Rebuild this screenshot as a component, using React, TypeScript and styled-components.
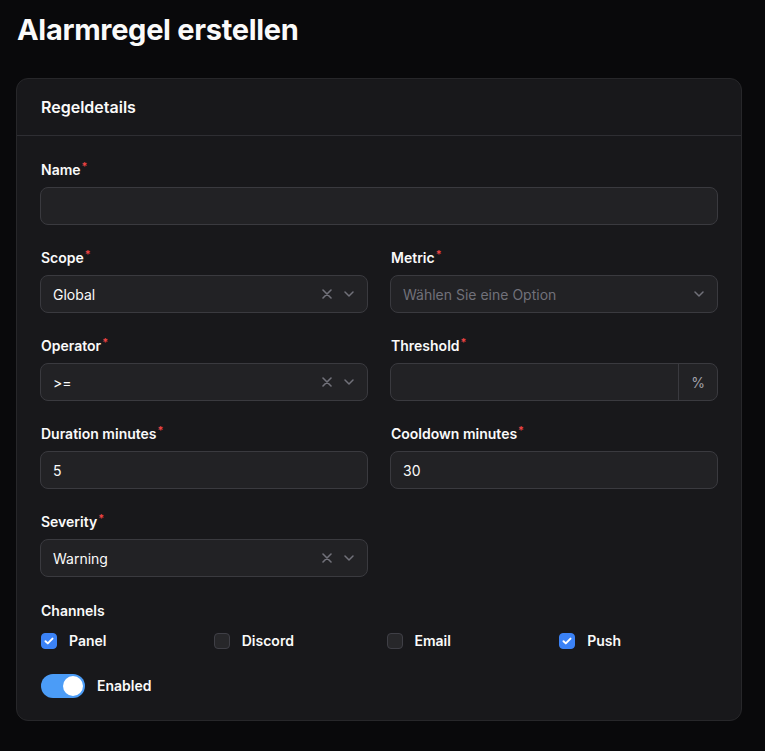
import React, { useState } from 'react';
import styled, { createGlobalStyle } from 'styled-components';

const GlobalStyle = createGlobalStyle`
    html, body {
        margin: 0;
        background: #09090b;
        color: #fafafa;
        font-family: Inter, 'Noto Sans', sans-serif;
    }
    * { box-sizing: border-box; }
`;

const channels = [
    { name: 'Panel', checked: true },
    { name: 'Discord', checked: false },
    { name: 'Email', checked: false },
    { name: 'Push', checked: true },
];

const ClearIcon = () => (
    <svg width="10" height="10" viewBox="0 0 10 10" fill="none" stroke="currentColor" strokeWidth="1.6" strokeLinecap="round">
        <path d="M1 1l8 8M9 1l-8 8" />
    </svg>
);

const ChevronIcon = () => (
    <svg width="10" height="6" viewBox="0 0 10 6" fill="none" stroke="currentColor" strokeWidth="1.5" strokeLinecap="round" strokeLinejoin="round">
        <path d="M1 1l4 4 4-4" />
    </svg>
);

function Field({ label, required = true, children }: { label: string; required?: boolean; children: React.ReactNode }) {
    return (
        <S.Field>
            <S.Label>
                {label}
                {required && <S.Star>*</S.Star>}
            </S.Label>
            {children}
        </S.Field>
    );
}

function Select({ value, placeholder, clearable = true }: { value?: string; placeholder?: string; clearable?: boolean }) {
    return (
        <S.Box>
            <S.Value $muted={!value}>{value || placeholder}</S.Value>
            <S.Icons>
                {clearable && value && <ClearIcon />}
                <ChevronIcon />
            </S.Icons>
        </S.Box>
    );
}

export default function App() {
    const [enabled, setEnabled] = useState(true);

    return (
        <S.Page>
            <GlobalStyle />
            <S.Title>Alarmregel erstellen</S.Title>
            <S.Card>
                <S.Header>Regeldetails</S.Header>
                <S.Body>
                    <Field label="Name">
                        <S.Box />
                    </Field>
                    <S.Grid>
                        <Field label="Scope">
                            <Select value="Global" />
                        </Field>
                        <Field label="Metric">
                            <Select placeholder="Wählen Sie eine Option" />
                        </Field>
                        <Field label="Operator">
                            <Select value=">=" />
                        </Field>
                        <Field label="Threshold">
                            <S.Box>
                                <S.Value />
                                <S.Suffix>%</S.Suffix>
                            </S.Box>
                        </Field>
                        <Field label="Duration minutes">
                            <S.Box>
                                <S.Value>5</S.Value>
                            </S.Box>
                        </Field>
                        <Field label="Cooldown minutes">
                            <S.Box>
                                <S.Value>30</S.Value>
                            </S.Box>
                        </Field>
                        <Field label="Severity">
                            <Select value="Warning" />
                        </Field>
                    </S.Grid>
                    <S.ChannelField>
                        <S.Label>Channels</S.Label>
                        <S.Channels>
                            {channels.map((c) => (
                                <S.Check key={c.name}>
                                    <S.CheckBox $checked={c.checked}>
                                        {c.checked && (
                                            <svg width="10" height="8" viewBox="0 0 10 8" fill="none" stroke="#fff" strokeWidth="2" strokeLinecap="round" strokeLinejoin="round">
                                                <path d="M1.5 4.2l2.3 2.2L8.5 1.6" />
                                            </svg>
                                        )}
                                    </S.CheckBox>
                                    {c.name}
                                </S.Check>
                            ))}
                        </S.Channels>
                    </S.ChannelField>
                    <S.Check onClick={() => setEnabled(!enabled)}>
                        <S.Switch $on={enabled}>
                            <S.Knob $on={enabled} />
                        </S.Switch>
                        Enabled
                    </S.Check>
                </S.Body>
            </S.Card>
        </S.Page>
    );
}

const S: any = {};
S.Page = styled.div`
    padding: 8px 16px 24px 16px;
    width: 765px;
`;

S.Title = styled.h1`
    margin: 0 0 26px 1px;
    font-size: 29px;
    line-height: 44px;
    font-weight: 700;
    letter-spacing: -0.3px;
`;

S.Card = styled.div`
    background: #18181b;
    border: 1px solid #27272a;
    border-radius: 12px;
    width: 726px;
`;

S.Header = styled.div`
    padding: 18px 24px;
    font-size: 16px;
    line-height: 20px;
    font-weight: 600;
    border-bottom: 1px solid #2e2e33;
`;

S.Body = styled.div`
    padding: 24px 23px 22px 23px;
    display: flex;
    flex-direction: column;
    gap: 23px;
`;

S.Grid = styled.div`
    display: grid;
    grid-template-columns: 1fr 1fr;
    column-gap: 22px;
    row-gap: 23px;
`;

S.Field = styled.div`
    display: flex;
    flex-direction: column;
    gap: 7px;
`;

S.ChannelField = styled(S.Field)`
    margin-top: 1px;
`;

S.Label = styled.div`
    font-size: 14px;
    line-height: 20px;
    font-weight: 600;
    margin-left: 1px;
`;

S.Star = styled.sup`
    color: #ef4444;
    font-size: 11px;
    margin-left: 1px;
    vertical-align: 5px;
    line-height: 0;
`;

S.Box = styled.div`
    display: flex;
    align-items: center;
    height: 38px;
    background: #222225;
    border: 1px solid #3a3a3f;
    border-radius: 8px;
    overflow: hidden;
`;

S.Value = styled.div<{ $muted?: boolean }>`
    flex: 1;
    padding: 0 12px;
    font-size: 14px;
    color: ${({ $muted }) => ($muted ? '#71717a' : '#fafafa')};
`;

S.Icons = styled.div`
    display: flex;
    align-items: center;
    gap: 12px;
    padding-right: 13px;
    color: #71717a;
`;

S.Suffix = styled.div`
    width: 39px;
    height: 100%;
    display: flex;
    align-items: center;
    justify-content: center;
    border-left: 1px solid #3a3a3f;
    font-size: 14px;
    color: #a1a1aa;
`;

S.Channels = styled.div`
    display: grid;
    grid-template-columns: repeat(4, 1fr);
    column-gap: 13px;
    margin-top: 3px;
`;

S.Check = styled.label`
    display: flex;
    align-items: center;
    gap: 12px;
    font-size: 14px;
    font-weight: 600;
    line-height: 20px;
    margin-left: 1px;
    cursor: pointer;
`;

S.CheckBox = styled.span<{ $checked: boolean }>`
    width: 16px;
    height: 16px;
    border-radius: 4px;
    display: flex;
    align-items: center;
    justify-content: center;
    background: ${({ $checked }) => ($checked ? '#3b82f6' : '#27272a')};
    border: 1px solid ${({ $checked }) => ($checked ? '#3b82f6' : '#3f3f46')};
`;

S.Switch = styled.span<{ $on: boolean }>`
    width: 44px;
    height: 24px;
    border-radius: 12px;
    background: ${({ $on }) => ($on ? '#4b9cf7' : '#3f3f46')};
    display: flex;
    align-items: center;
    padding: 2px;
`;

S.Knob = styled.span<{ $on: boolean }>`
    width: 20px;
    height: 20px;
    border-radius: 50%;
    background: #fff;
    margin-left: ${({ $on }) => ($on ? '20px' : '0')};
`;
